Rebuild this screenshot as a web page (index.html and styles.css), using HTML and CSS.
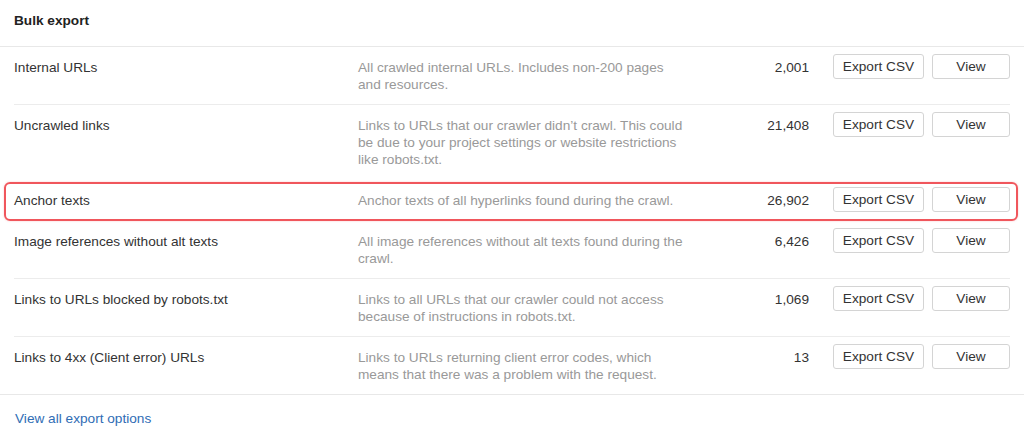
FILE: index.html
```html
<!DOCTYPE html>
<html lang="en">
<head>
<meta charset="utf-8">
<title>Bulk export</title>
<link rel="stylesheet" href="styles.css">
</head>
<body>
<div class="panel">
  <div class="panel-header">Bulk export</div>
  <div class="rows">
    <div class="row">
      <div class="name">Internal URLs</div>
      <div class="desc">All crawled internal URLs. Includes non-200 pages and resources.</div>
      <div class="count">2,001</div>
      <div class="actions"><button class="btn btn-export">Export CSV</button><button class="btn btn-view">View</button></div>
    </div>
    <div class="row row-no-border">
      <div class="name">Uncrawled links</div>
      <div class="desc">Links to URLs that our crawler didn’t crawl. This could be due to your project settings or website restrictions like robots.txt.</div>
      <div class="count">21,408</div>
      <div class="actions"><button class="btn btn-export">Export CSV</button><button class="btn btn-view">View</button></div>
    </div>
    <div class="row row-no-border row-highlight">
      <div class="name">Anchor texts</div>
      <div class="desc">Anchor texts of all hyperlinks found during the crawl.</div>
      <div class="count">26,902</div>
      <div class="actions"><button class="btn btn-export">Export CSV</button><button class="btn btn-view">View</button></div>
    </div>
    <div class="row">
      <div class="name">Image references without alt texts</div>
      <div class="desc">All image references without alt texts found during the crawl.</div>
      <div class="count">6,426</div>
      <div class="actions"><button class="btn btn-export">Export CSV</button><button class="btn btn-view">View</button></div>
    </div>
    <div class="row">
      <div class="name">Links to URLs blocked by robots.txt</div>
      <div class="desc">Links to all URLs that our crawler could not access because of instructions in robots.txt.</div>
      <div class="count">1,069</div>
      <div class="actions"><button class="btn btn-export">Export CSV</button><button class="btn btn-view">View</button></div>
    </div>
    <div class="row row-last">
      <div class="name">Links to 4xx (Client error) URLs</div>
      <div class="desc">Links to URLs returning client error codes, which means that there was a problem with the request.</div>
      <div class="count">13</div>
      <div class="actions"><button class="btn btn-export">Export CSV</button><button class="btn btn-view">View</button></div>
    </div>
  </div>
  <div class="panel-footer"><a class="footer-link" href="#">View all export options</a></div>
</div>
</body>
</html>
```
FILE: styles.css
```css
* { box-sizing: border-box; }
html, body { margin: 0; padding: 0; background: #fff; }
body {
  font-family: "Liberation Sans", Arial, Helvetica, sans-serif;
  font-size: 13.65px;
  line-height: 17px;
  color: #333;
}
.panel { width: 1024px; }
.panel-header {
  height: 47px;
  padding: 12px 14px 0;
  font-weight: bold;
  color: #222;
  border-bottom: 1px solid #e8e8e8;
}
.rows { border-bottom: 1px solid #e8e8e8; }
.row {
  margin: 0 14px;
  padding: 12px 0 11px;
  display: grid;
  grid-template-columns: 344px 329px 1fr auto;
  align-items: start;
  border-bottom: 1px solid #ececec;
  position: relative;
}
.row-no-border { border-bottom-color: transparent; }
.row-last { border-bottom: none; }
.name { color: #333; }
.desc { color: #999; }
.count { text-align: right; color: #333; }
.actions {
  display: flex;
  gap: 8px;
  margin: -5px 0 -5px 24px;
}
.btn {
  height: 25px;
  padding: 0;
  border: 1px solid #d4d4d4;
  border-radius: 3px;
  background: #fff;
  color: #333;
  font-family: inherit;
  font-size: 13.65px;
  line-height: 23px;
  text-align: center;
}
.btn-export { width: 91px; }
.btn-view { width: 78px; }
.row-highlight::after {
  content: "";
  position: absolute;
  top: 2px;
  left: -10px;
  right: -8px;
  height: 35px;
  border: 2px solid #f0565c;
  border-radius: 6px;
  box-shadow: 0 0 2px rgba(240, 86, 92, 0.35);
  pointer-events: none;
}
.panel-footer {
  height: 44px;
  padding: 15px 15px 0;
}
.footer-link {
  color: #2f6db5;
  text-decoration: none;
}
```
